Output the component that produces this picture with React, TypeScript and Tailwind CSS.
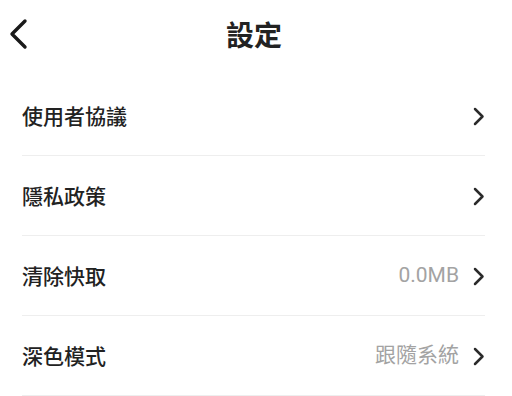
const rows: { label: string; value?: string }[] = [
  { label: "使用者協議" },
  { label: "隱私政策" },
  { label: "清除快取", value: "0.0MB" },
  { label: "深色模式", value: "跟隨系統" },
];

function ChevronRight() {
  return (
    <svg width="12" height="19" viewBox="0 0 12 19" className="shrink-0" aria-hidden>
      <path d="M2 2 L9.5 9.5 L2 17" fill="none" stroke="#2b2b2b" strokeWidth="2.5" strokeLinecap="round" strokeLinejoin="round" />
    </svg>
  );
}

export default function App() {
  return (
    <div
      className="h-[396px] w-[512px] overflow-hidden bg-white text-[#222]"
      style={{ fontFamily: '"Noto Sans CJK TC", Roboto, "Noto Sans", sans-serif' }}
    >
      {/* 頂部導覽列 */}
      <header className="grid h-[76px] grid-cols-[1fr_auto_1fr] items-center pb-[8px]">
        <button className="flex h-full items-center pl-[8px]" aria-label="返回">
          <svg width="20" height="32" viewBox="0 0 20 32" aria-hidden>
            <path d="M17 3 L4 16 L17 29" fill="none" stroke="#1a1a1a" strokeWidth="3.4" strokeLinecap="round" strokeLinejoin="round" />
          </svg>
        </button>
        <h1 className="mr-[4px] text-[28px] font-bold leading-none">設定</h1>
        <div />
      </header>

      <ul className="pl-[22px] pr-[27px]">
        {rows.map((r) => (
          <li
            key={r.label}
            className="flex h-[80px] items-center border-b border-[#eeeeee] pt-[1px]"
          >
            <span className="flex-1 text-[21px] font-medium">{r.label}</span>
            {r.value && (
              <span className="mr-[14px] text-[21px] text-[#a3a3a3]" style={{ fontFamily: 'Roboto, "Noto Sans CJK TC", sans-serif' }}>
                {r.value}
              </span>
            )}
            <ChevronRight />
          </li>
        ))}
      </ul>
    </div>
  );
}
